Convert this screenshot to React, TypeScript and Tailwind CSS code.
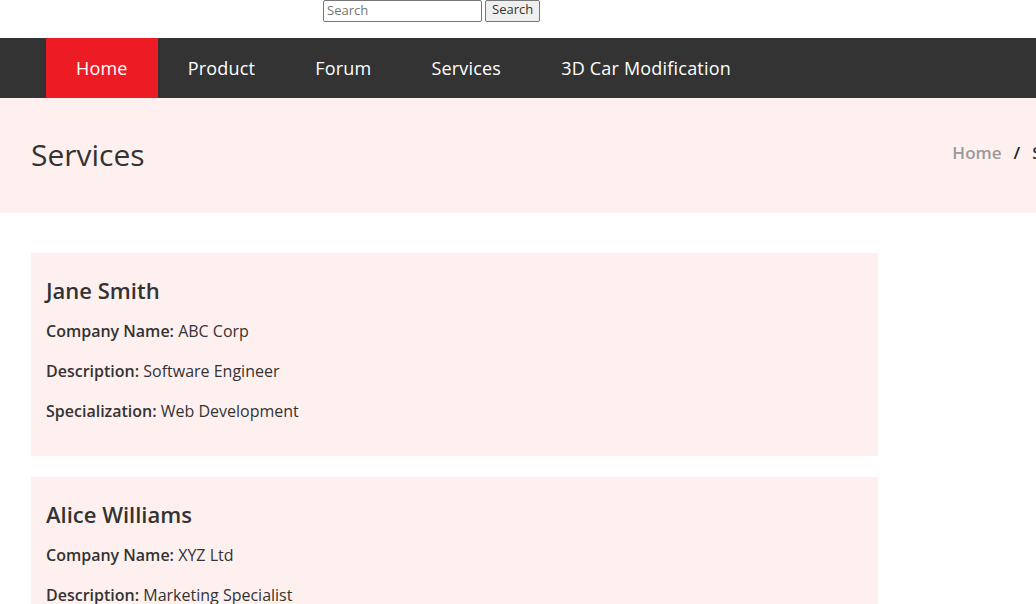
import React from "react";

const navItems = ["Home", "Product", "Forum", "Services", "3D Car Modification"];

const people = [
  {
    name: "Jane Smith",
    company: "ABC Corp",
    description: "Software Engineer",
    specialization: "Web Development",
  },
  {
    name: "Alice Williams",
    company: "XYZ Ltd",
    description: "Marketing Specialist",
    specialization: "Digital Marketing",
  },
];

export default function App() {
  return (
    <div className="h-[604px] w-[1036px] overflow-hidden bg-white text-[#333] font-['Open_Sans',sans-serif]">
      {/* search bar */}
      <div className="flex h-[38px] items-start pl-[323px]">
        <input
          type="text"
          placeholder="Search"
          className="h-[22px] w-[159px] border border-[#767676] rounded-[2px] px-[3px] pb-[3px] text-[13px] text-[#333] placeholder:text-[#757575] font-['Open_Sans',sans-serif] outline-none"
        />
        <button className="ml-[3px] h-[22px] rounded-[2px] border border-[#767676] bg-[#efefef] px-[6px] pb-[3px] text-[13px] leading-none text-[#333] font-['Open_Sans',sans-serif]">
          Search
        </button>
      </div>

      {/* nav */}
      <nav className="bg-[#333333]">
        <ul className="flex h-[60px] pl-[46px]">
          {navItems.map((item, i) => (
            <li
              key={item}
              className={`flex items-center px-[30px] text-[18px] tracking-[0.2px] text-white ${
                i === 0 ? "bg-[#ed1c24]" : ""
              }`}
            >
              {item}
            </li>
          ))}
        </ul>
      </nav>

      {/* page header */}
      <div className="h-[115px] w-[1134px] bg-[#fff0f0]">
        <div className="flex h-full items-center justify-between pl-[31px] pr-[35px]">
          <h1 className="text-[30px] font-medium text-[#333] pb-[2px]">Services</h1>
          <div className="flex items-center gap-[12px] whitespace-nowrap text-[17px] font-semibold pb-[6px]">
            <span className="text-[#999]">Home</span>
            <span className="text-[#222]">/</span>
            <span className="text-[#333]">Services</span>
          </div>
        </div>
      </div>

      {/* cards */}
      <div className="flex flex-col gap-[21px] px-[31px] pt-[40px]">
        {people.map((p) => (
          <div key={p.name} className="w-[847px] bg-[#fff0f0] px-[15px] pt-[16px] pb-[17px]">
            <h3 className="mt-[8px] mb-[16px] text-[22px] leading-[26px] font-semibold text-[#333]">
              {p.name}
            </h3>
            <p className="mb-[16px] text-[16px] leading-[24px]">
              <strong className="font-semibold">Company Name:</strong> {p.company}
            </p>
            <p className="mb-[16px] text-[16px] leading-[24px]">
              <strong className="font-semibold">Description:</strong> {p.description}
            </p>
            <p className="mb-[16px] text-[16px] leading-[24px]">
              <strong className="font-semibold">Specialization:</strong> {p.specialization}
            </p>
          </div>
        ))}
      </div>
    </div>
  );
}
